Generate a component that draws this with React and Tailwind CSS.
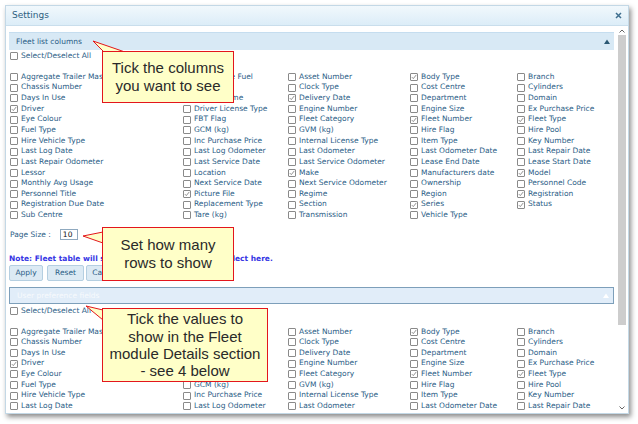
import React from "react";

const ITEMS = [
  "Aggregate Trailer Mass", "Alternative Fuel", "Asset Number", "Body Type", "Branch",
  "Chassis Number", "Class", "Clock Type", "Cost Centre", "Cylinders",
  "Days In Use", "Dealer Name", "Delivery Date", "Department", "Domain",
  "Driver", "Driver License Type", "Engine Number", "Engine Size", "Ex Purchase Price",
  "Eye Colour", "FBT Flag", "Fleet Category", "Fleet Number", "Fleet Type",
  "Fuel Type", "GCM (kg)", "GVM (kg)", "Hire Flag", "Hire Pool",
  "Hire Vehicle Type", "Inc Purchase Price", "Internal License Type", "Item Type", "Key Number",
  "Last Log Date", "Last Log Odometer", "Last Odometer", "Last Odometer Date", "Last Repair Date",
  "Last Repair Odometer", "Last Service Date", "Last Service Odometer", "Lease End Date", "Lease Start Date",
  "Lessor", "Location", "Make", "Manufacturers date", "Model",
  "Monthly Avg Usage", "Next Service Date", "Next Service Odometer", "Ownership", "Personnel Code",
  "Personnel Title", "Picture File", "Regime", "Region", "Registration",
  "Registration Due Date", "Replacement Type", "Section", "Series", "Status",
  "Sub Centre", "Tare (kg)", "Transmission", "Vehicle Type",
];

const TOP_CHECKED = new Set([
  "Body Type", "Delivery Date", "Driver", "Fleet Number", "Fleet Type", "Make",
  "Model", "Picture File", "Registration", "Series", "Status",
]);
const BOTTOM_CHECKED = new Set(["Body Type", "Driver", "Fleet Number", "Fleet Type"]);

function Box({ checked }) {
  return (
    <span className="relative inline-block w-[8px] h-[8px] shrink-0 border border-[#8a8a8a] bg-white rounded-[1px]">
      {checked && (
        <svg viewBox="0 0 6 6" className="absolute inset-0 w-full h-full">
          <path d="M0.8 3.1 L2.3 4.6 L5.3 0.9" stroke="#767676" strokeWidth="0.8" fill="none" />
        </svg>
      )}
    </span>
  );
}

function Grid({ checked }) {
  return (
    <div className="grid grid-cols-[173px_105px_122px_107px_1fr] auto-rows-[10.65px] ml-[1px] mt-[10.65px]">
      {ITEMS.map((it) => (
        <div key={it} className="flex items-center gap-[3px] whitespace-nowrap overflow-hidden leading-[10.65px]">
          <Box checked={checked.has(it)} />
          <span>{it}</span>
        </div>
      ))}
    </div>
  );
}

function Tri({ color }) {
  return (
    <svg width="6" height="5" viewBox="0 0 6 5">
      <path d="M0 5 L3 0.5 L6 5 Z" fill={color} />
    </svg>
  );
}

function Callout({ box, tip, base, lines, lh }) {
  return (
    <>
      <svg className="absolute left-0 top-0 pointer-events-none" width="638" height="424" viewBox="0 0 638 424">
        <path
          d={`M${base[0][0]} ${base[0][1]} L${tip[0]} ${tip[1]} L${base[1][0]} ${base[1][1]}`}
          fill="#ffffc8"
          stroke="#e3161c"
          strokeWidth="1"
        />
      </svg>
      <div
        className="absolute flex flex-col items-center justify-center border border-[#e3161c] bg-[#ffffc8] text-[15px] text-[#2a2a2a] font-['Liberation_Sans',Arial,sans-serif] whitespace-nowrap"
        style={{ left: box[0], top: box[1], width: box[2], height: box[3], lineHeight: lh }}
      >
        {lines.map((l) => (
          <div key={l}>{l}</div>
        ))}
      </div>
    </>
  );
}

export default function App() {
  return (
    <div className="relative w-[638px] h-[424px] bg-white overflow-hidden font-['DejaVu_Sans',Verdana,sans-serif] text-[7.5px] text-[#2a5d86]">
      <div className="ml-[5px] mt-[5px] w-[624px] h-[409px] border border-[#c3d8e6] bg-white shadow-[2px_3px_5px_rgba(0,0,0,0.45)] flex flex-col">
        {/* title bar */}
        <div className="h-[20px] shrink-0 flex items-center justify-between pl-[6px] pr-[6px] bg-gradient-to-b from-[#f1f8fc] to-[#dcedf8] border-b border-[#c9deec]">
          <span className="text-[9px] text-[#2d5e7f]">Settings</span>
          <svg width="7" height="7" viewBox="0 0 7 7">
            <path d="M1 1 L6 6 M6 1 L1 6" stroke="#3f6f8f" strokeWidth="1.5" />
          </svg>
        </div>
        {/* body */}
        <div className="flex-1 flex min-h-0">
          <div className="flex-1 min-w-0 overflow-hidden pl-[3px] pr-[4px] pt-[6px]">
            <div className="h-[18px] flex items-center justify-between bg-[#d8e9f5] border-t border-[#c5ddef] pl-[7px] pr-[4px]">
              <span>Fleet list columns</span>
              <Tri color="#2b5873" />
            </div>
            <div className="h-[10.65px] mt-[0.5px] ml-[1px] flex items-center gap-[3px]">
              <Box />
              <span>Select/Deselect All</span>
            </div>
            <Grid checked={TOP_CHECKED} />
            <div className="h-[12px] mt-[8px] ml-[1px] flex items-center">
              <span>Page Size :</span>
              <span className="ml-[9px] w-[18px] h-[11px] border border-[#8fa9bf] flex items-center pl-[2px] text-[#111]">10</span>
            </div>
            <div className="h-[10px] mt-[13px] flex items-center whitespace-nowrap text-[#3535e4] font-semibold">
              Note: Fleet table will show more rows. To change, select here.
            </div>
            <div className="h-[16px] mt-[1px] flex">
              <div className="w-[34px] h-full flex items-center justify-center bg-[#dceaf4] border border-[#b5cfe1] rounded-[2px]">Apply</div>
              <div className="w-[37px] ml-[4px] h-full flex items-center justify-center bg-[#dceaf4] border border-[#b5cfe1] rounded-[2px]">Reset</div>
              <div className="w-[38px] ml-[2px] h-full flex items-center justify-center bg-[#dceaf4] border border-[#b5cfe1] rounded-[2px]">Cancel</div>
            </div>
            <div className="h-[17px] mt-[6px] flex items-center justify-between bg-[#e1edf9] border border-[#7d9fba] pl-[7px] pr-[4px] text-[#f7fafd]">
              <span>User preference fields</span>
              <Tri color="#ffffff" />
            </div>
            <div className="h-[10.65px] mt-[1.5px] ml-[1px] flex items-center gap-[3px]">
              <Box />
              <span>Select/Deselect All</span>
            </div>
            <Grid checked={BOTTOM_CHECKED} />
          </div>
          {/* scrollbar */}
          <div className="w-[10px] shrink-0 flex flex-col">
            <div className="h-[9px] flex items-center justify-center pr-[2px]">
              <svg width="6" height="4" viewBox="0 0 6 4">
                <path d="M0.5 3.5 L3 1 L5.5 3.5" stroke="#555" strokeWidth="0.9" fill="none" />
              </svg>
            </div>
            <div className="w-[8px] h-[290px] bg-[#cdcdcd]" />
            <div className="flex-1" />
            <div className="h-[10px] flex items-center justify-center pr-[2px]">
              <svg width="6" height="4" viewBox="0 0 6 4">
                <path d="M0.5 0.5 L3 3 L5.5 0.5" stroke="#555" strokeWidth="0.9" fill="none" />
              </svg>
            </div>
          </div>
        </div>
      </div>

      <Callout
        box={[102, 51, 132, 52]}
        tip={[93, 41]}
        base={[[104, 52], [125, 52]]}
        lines={["Tick the columns", "you want to see"]}
        lh="18px"
      />
      <Callout
        box={[102, 227, 132, 54]}
        tip={[83, 236]}
        base={[[103, 232], [103, 243]]}
        lines={["Set how many", "rows to show"]}
        lh="18px"
      />
      <Callout
        box={[102, 308, 166, 74]}
        tip={[86, 306]}
        base={[[103, 310], [103, 320]]}
        lines={["Tick the values to", "show in the Fleet", "module Details section", "- see 4 below"]}
        lh="17.3px"
      />
    </div>
  );
}
